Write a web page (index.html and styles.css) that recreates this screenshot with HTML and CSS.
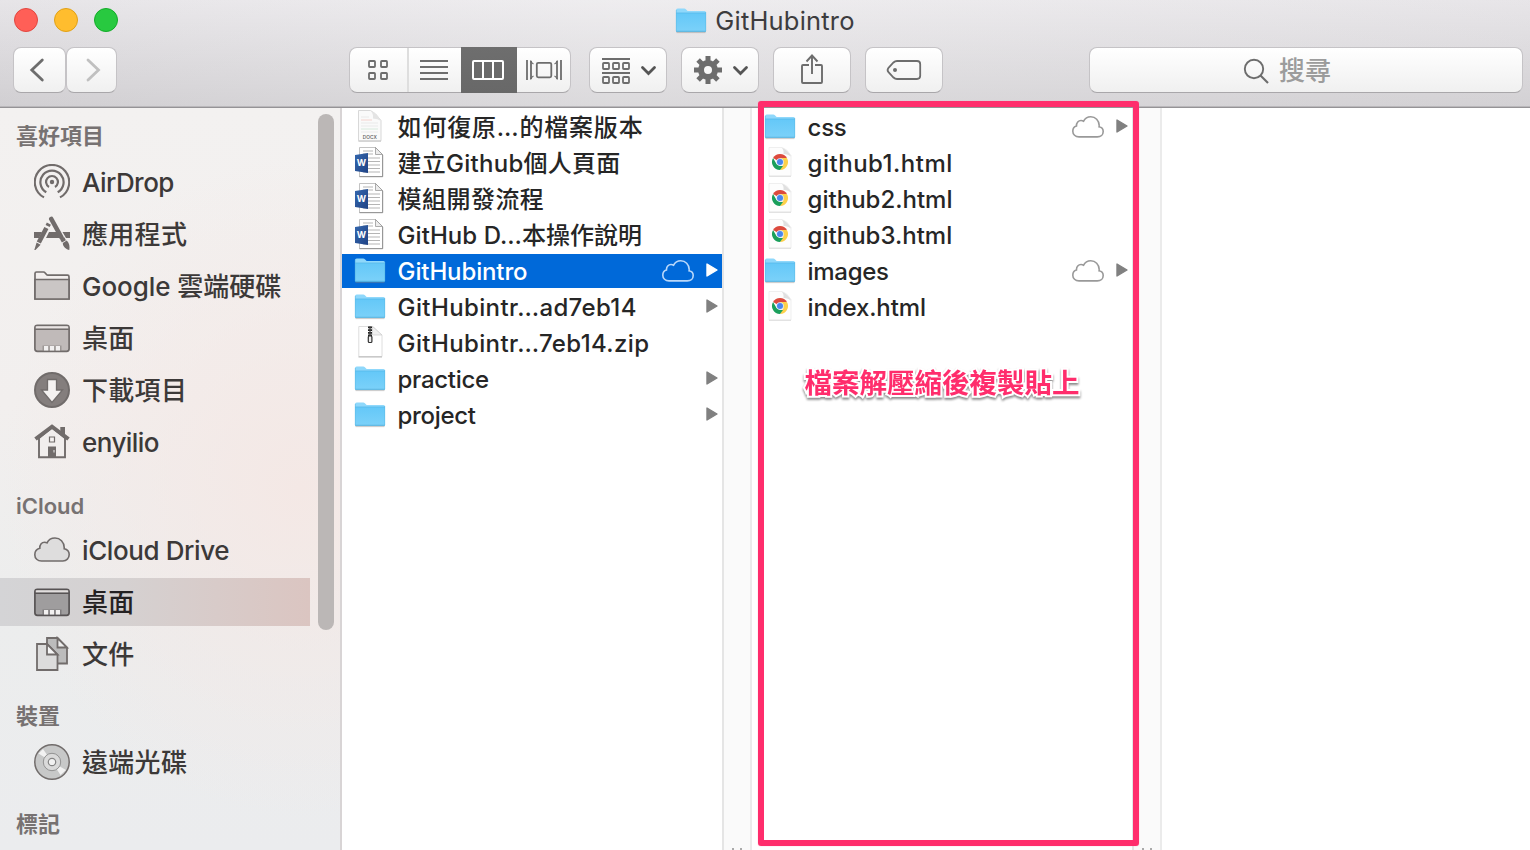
FILE: index.html
```
<!DOCTYPE html>
<html lang="zh-Hant">
<head>
<meta charset="utf-8">
<title>GitHubintro</title>
<link rel="stylesheet" href="styles.css">
</head>
<body>
<svg class="defs" width="0" height="0">
  <defs>
    <linearGradient id="fg" x1="0" y1="0" x2="0" y2="1"><stop offset="0" stop-color="#64c8f8"/><stop offset="1" stop-color="#7bd1f9"/></linearGradient>
    <linearGradient id="wg" x1="0" y1="0" x2="1" y2="1"><stop offset="0" stop-color="#3567ad"/><stop offset="1" stop-color="#1f4386"/></linearGradient>
    <symbol id="folder" viewBox="0 0 32 36">
      <path d="M1.500 29.600h29" stroke="#888" stroke-opacity=".45"/>
      <path d="M1 7Q1 5.500 2.700 5.500h6.500q1 0 1.700.8l1.200 1.200q.5.500 1.400.5h16q1.500 0 1.500 1.500V28H1z" fill="#8fd8fb"/>
      <path d="M1 10h30v17.200q0 1.500-1.500 1.500h-27Q1 28.700 1 27.200z" fill="url(#fg)"/>
      <path d="M1 10h30" stroke="#55b9ea" stroke-width=".8"/><path d="M1 28.300h30" stroke="#4eaeda" stroke-width=".9"/>
      <path d="M1.300 7v21M30.700 9v19" stroke="#5dbbe6" stroke-width=".6"/>
    </symbol>
    <symbol id="docx" viewBox="0 0 32 36">
      <path d="M4.500 1.500h12q5 2 10.500 10v20.300H4.500z" fill="#fafafa" stroke="#d4d4d4" stroke-width=".9"/>
      <path d="M16.500 1.500q3 3 2.500 8 5 0 8 2.500Q23 4 16.500 1.500z" fill="#e4e4e4"/>
      <path d="M7 8h8M7 14h17M7 17h17M7 23h17" stroke="#e6e6e6" stroke-width=".8"/><path d="M7 11h11" stroke="#f3c9c3" stroke-width=".8"/><path d="M7 20h17" stroke="#cfe6d6" stroke-width=".8"/>
      <text x="15.800" y="29.500" text-anchor="middle" font-size="4.800" fill="#555" class="mini">DOCX</text>
      <path d="M4.500 32.200H27" stroke="#bbb" stroke-width=".8"/>
    </symbol>
    <symbol id="word" viewBox="0 0 32 36">
      <path d="M5.500 2.500h16l7 7v22h-23z" fill="#fff" stroke="#b4b4b4" stroke-width=".8"/>
      <path d="M5.500 31.700h23.200V10M21.500 2.500l7 7" fill="none" stroke="#888" stroke-width=".9"/>
      <path d="M21.500 2.500V9.500h7z" fill="#ececec" stroke="#999" stroke-width=".8"/>
      <path d="M9 6h10M9 9h10M14 13h12M14 16.500h12M14 20h12M14 23.500h12M9 27h17" stroke="#a2a2a2" stroke-width=".8"/>
      <path d="M1 10 14 8v20L1 26z" fill="url(#wg)"/>
      <text x="7.300" y="21.400" text-anchor="middle" font-size="9" font-weight="700" fill="#fff" class="mini">W</text>
    </symbol>
    <symbol id="zip" viewBox="0 0 32 36">
      <path d="M4.800 1.500h14.200l9 9v21H4.800z" fill="#fff" stroke="#dadada" stroke-width=".9"/>
      <path d="M18.500 1.500V10H28z" fill="#f0f0f0" stroke="#ccc" stroke-width=".7"/>
      <path d="M4.500 32h23.500" stroke="#aaa" stroke-width=".8"/>
      <path d="M16 1.500v12" stroke="#222" stroke-width="4" stroke-dasharray="1.800 .9"/><path d="M16 1.500v12" stroke="#444" stroke-width="1.300"/>
      <rect x="14.300" y="11" width="3.600" height="6.500" rx="1" fill="#eee" stroke="#333" stroke-width="1.200"/>
    </symbol>
    <symbol id="html" viewBox="0 0 32 36">
      <path d="M5 2.500h13q5 1 9 8v20.500H5z" fill="#fdfdfd" stroke="#e8e8e8" stroke-width=".7"/>
      <path d="M17.500 2.500q2.500 2 2 6.500 4-.5 7.500 2.500-3-6.500-9.500-9z" fill="#e0e0e0"/>
      <path d="M5 31.300h22" stroke="#d5d5d5" stroke-width=".8"/>
      <path d="M16 17 9.070 13a8 8 0 0 1 13.860 0z" fill="#dc4a3d"/>
      <path d="M16 13h6.930A8 8 0 0 1 16 25l3.500-6z" fill="#fdd14b"/>
      <path d="M9.070 13 12.500 19l3.500 2 3 0L16 25A8 8 0 0 1 9.070 13z" fill="#1a9f5b"/>
      <circle cx="16" cy="17" r="3.800" fill="#dfe8f6"/><circle cx="16" cy="17" r="3" fill="#4a87ee"/>
    </symbol>
    <symbol id="cloud" viewBox="0 0 32 22">
      <path d="M7 20.900C3.300 20.900.8 18.400.8 15.200c0-2.700 1.500-4.600 3.700-5.200C4.300 6.700 6.500 4.500 9 4.500c1 0 1.800.2 2.600.7C13 2.300 15.700.8 18.800.8c4.700 0 8.200 3.500 8.400 8.600.1.500 0 1-.1 1.400 2.400.4 4.100 2.200 4.100 4.700 0 3.100-2.400 5.400-5.900 5.400z" fill="none" stroke="currentColor" stroke-width="1.600"/>
    </symbol>
    <symbol id="arrow" viewBox="0 0 12 14"><path d="M1 1v12l10-6z" fill="currentColor" stroke="currentColor" stroke-width="1.400" stroke-linejoin="round"/></symbol>
    <symbol id="desk" viewBox="0 0 36 36">
      <rect x=".9" y="5.300" width="34.200" height="26" rx="2.500" fill="var(--fill)" stroke="currentColor" stroke-width="1.700"/>
      <path d="M1.800 6.200h32.400v2.500H1.800z" fill="#f3efee" fill-opacity=".8"/><path d="M1 9.300h34" stroke="currentColor" stroke-width="1.500"/>
      <path d="M8.500 25.500h19v5h-19z" fill="currentColor" fill-opacity=".45"/><path d="M10 26h4.200v4.400H10zM15.900 26h4.200v4.400h-4.200zM21.800 26H26v4.400h-4.200z" fill="#f2f0f0"/>
    </symbol>
  </defs>
</svg>

<div class="window">
  <header class="chrome">
    <div class="titlebar">
      <div class="lights"><i class="red"></i><i class="yellow"></i><i class="green"></i></div>
      <div class="title"><svg class="file"><use href="#folder"/></svg><span>GitHubintro</span></div>
    </div>
    <div class="toolbar">
      <button class="btn back"><svg width="51" height="44" viewBox="14 48 51 44"><path d="M42.300 60 31.800 70 42.300 80" stroke-width="2.800" stroke-linecap="round"/></svg></button>
      <button class="btn forward"><svg width="49" height="44" viewBox="67 48 49 44"><path d="M88 60 98.500 70 88 80" stroke-width="2.800" stroke-linecap="round"/></svg></button>
      <div class="btn views">
        <svg width="57" height="44" viewBox="350 48 57 44" stroke-width="2"><rect x="369" y="61" width="6" height="6" rx=".8"/><rect x="381" y="61" width="6" height="6" rx=".8"/><rect x="369" y="73" width="6" height="6" rx=".8"/><rect x="381" y="73" width="6" height="6" rx=".8"/></svg>
        <svg class="split" width="54" height="44" viewBox="408 48 52 44"><path d="M419 61h28M419 67h28M419 73h28M419 79h28" stroke-width="1.900"/></svg>
        <svg class="active" width="56" height="46" viewBox="461 47 56 46"><rect x="473" y="61" width="30" height="18" rx="1"/><path d="M483 61v18M493 61v18"/></svg>
        <svg width="53" height="44" viewBox="517 48 53 44"><rect x="536.800" y="62.800" width="14.500" height="14.500" rx="1.500"/><path d="M527 60v20M561 60v20M531 61v18M557 61v18"/><path d="M530.500 60.500q.8 2.500 3 3.500M530.500 79.500q.8-2.500 3-3.500M557.500 60.500q-.8 2.500-3 3.500M557.500 79.500q-.8-2.500-3-3.500" stroke-width="1.200"/></svg>
      </div>
      <button class="btn tool group"><svg width="76" height="44" viewBox="590 48 76 44"><path d="M602 59h28M602 73h28"/><g><rect x="603" y="63" width="6" height="6" rx=".8"/><rect x="613" y="63" width="6" height="6" rx=".8"/><rect x="623" y="63" width="6" height="6" rx=".8"/><rect x="603" y="77" width="6" height="6" rx=".8"/><rect x="613" y="77" width="6" height="6" rx=".8"/><rect x="623" y="77" width="6" height="6" rx=".8"/></g><path d="m642.500 67.500 6 6 6-6" stroke="#555" stroke-width="2.800" stroke-linecap="round"/></svg></button>
      <button class="btn tool"><svg width="76" height="44" viewBox="682 48 76 44"><circle cx="708" cy="70" r="7" stroke-width="6"/><path d="M708 56v5M708 79v5M694 70h5M717 70h5M698.100 60.100l3.500 3.500M714.400 76.400l3.500 3.500M717.900 60.100l-3.500 3.500M701.600 76.400l-3.500 3.500" stroke-width="5"/><path d="m734.500 67.500 6 6 6-6" stroke="#555" stroke-width="2.800" stroke-linecap="round"/></svg></button>
      <button class="btn tool"><svg width="76" height="44" viewBox="774 48 76 44"><path d="M809 65h-6q-1 0-1 1v16q0 1 1 1h18q1 0 1-1V66q0-1-1-1h-6M812 74V56M806.500 61.500l5.500-6 5.500 6" stroke-width="1.900"/></svg></button>
      <button class="btn tool"><svg width="76" height="44" viewBox="866 48 76 44"><path d="M897 61h20q3.200 0 3.200 3.200v11.600q0 3.200-3.200 3.200h-20q-2 0-3.500-1.500l-5-5.300q-1.800-2.200 0-4.400l5-5.300Q895 61 897 61z" stroke-width="1.800"/><circle class="dot" cx="895" cy="70" r="2"/></svg></button>
      <div class="btn search"><svg width="27" height="27" viewBox="1243 58 27 27"><circle cx="1254" cy="70" r="9.200" stroke-width="1.900"/><path d="m1260.500 76.500 7.500 7.500" stroke-width="2.100"/></svg><span>搜尋</span></div>
    </div>
  </header>

  <div class="body">
    <aside class="sidebar">
      <h2 class="first">喜好項目</h2>
      <div class="item"><svg viewBox="0 0 36 36"><path d="M10 33.400a17.200 17.200 0 1 1 16 0M12.300 28.300a11.600 11.600 0 1 1 11.400 0M15 23a5.900 5.900 0 1 1 6 0" fill="none" stroke="currentColor" stroke-width="2.200"/><circle cx="18" cy="18" r="2.200" fill="currentColor"/></svg><span class="airdrop">AirDrop</span></div>
      <div class="item"><svg viewBox="0 0 36 36"><path d="M0 16h8l-3 6H0zM15 16h8l3 6H12zM28.500 16H36v6h-4z" fill="currentColor"/><g stroke="currentColor" stroke-width="4.600"><path d="m17.300 3 10.200 18.500" stroke-linecap="round"/><path d="m28.300 22.500 1.600 2.800M13.600 10 14.900 7.600M4.800 26.500 12.400 12"/></g><path d="m2.600 26.500 4 2.200L1.500 34H.3zM28.800 27l4-2.500c2.800 3 3 6 2.500 9.500-3-.5-6.500-3-6.500-7z" fill="currentColor"/></svg><span>應用程式</span></div>
      <div class="item"><svg viewBox="0 0 36 36"><path d="M1 5.500Q1 4 2.500 4h7q1 0 1.500.7L12.500 6.500q.5.700 1.500.7h19.500Q35 7.200 35 8.700V31H1z" fill="#f3efee" stroke="currentColor" stroke-width="1.700"/><path d="M1 11.500h34V31H1z" fill="#cac6c5" stroke="currentColor" stroke-width="1.700"/></svg><span class="google">Google 雲端硬碟</span></div>
      <div class="item"><svg class="dsk"><use href="#desk"/></svg><span>桌面</span></div>
      <div class="item"><svg viewBox="0 0 36 36"><circle cx="18" cy="18" r="17" fill="#847e7d" stroke="currentColor" stroke-width="2"/><path d="M13.500 7.500h9V18h6L18 30.500 7.500 18h6z" fill="#f5f2f1" stroke="currentColor" stroke-width="1.300"/></svg><span>下載項目</span></div>
      <div class="item"><svg viewBox="0 0 36 36"><path d="M26.300 3H31v12h-4.700z" fill="currentColor"/><path d="M5 14v19.200h26V14L18 3.500z" fill="#f1eeed" stroke="currentColor" stroke-width="1.900"/><path d="M1.500 15 18 2.700 34.500 15" fill="none" stroke="currentColor" stroke-width="4"/><path d="M14 22.500h8V34h-8z" fill="currentColor"/><path d="M20 26v2.500" stroke="#eee"/><path d="M15.500 13h5v5h-5z" fill="#f5f2f1" stroke="currentColor" stroke-width="1.200"/></svg><span class="home">enyilio</span></div>
      <h2>iCloud</h2>
      <div class="item"><svg viewBox="0 0 36 36"><path d="M7.500 29C3.500 29 .8 26.400.8 22.700c0-3.200 2-5.600 5-6.400C5.600 12.300 8 10.200 10.500 10.200c1 0 1.700.2 2.500.7C14.500 7.800 17.600 6 21 6c5.200 0 9.100 4 9.200 9.500v1.300c3 .6 5 2.800 5 5.800 0 3.700-2.700 6.400-6.300 6.400z" fill="#dedddd" stroke="currentColor" stroke-width="1.600"/></svg><span class="drive">iCloud Drive</span></div>
      <div class="item selected"><svg class="dsk"><use href="#desk"/></svg><span>桌面</span></div>
      <div class="item"><svg viewBox="0 0 36 36" stroke="currentColor" stroke-width="1.800"><path d="M13 2h10.500L33 11.500v16H13z" fill="#bcbcbc"/><path d="M23.500 2v9.500H33z" fill="#eee"/><path d="M3 8h10l10.500 10.500V34H3z" fill="#dcdcdc"/><path d="M13 8v10.500h10.500z" fill="#f5f5f5"/></svg><span>文件</span></div>
      <h2 class="lift">裝置</h2>
      <div class="item"><svg viewBox="0 0 36 36"><circle cx="18" cy="18" r="17.200" fill="#c7c8c8" stroke="currentColor" stroke-width="1.500"/><path d="M18 18 4.500 9.500 9 5zM18 18l14 8-5.500 5z" fill="#f2f2f2"/><circle cx="18" cy="18" r="8.700" fill="#dadada" stroke="#929292"/><circle cx="18" cy="18" r="3.700" fill="#f2f2f2" stroke="#858585" stroke-width="1.200"/></svg><span>遠端光碟</span></div>
      <h2 class="lift">標記</h2>
      <div class="scrollbar"></div>
    </aside>

    <main class="columns">
      <section class="column">
        <div class="row"><svg class="file"><use href="#docx"/></svg><span class="cjk wide">如何復原…的檔案版本</span></div>
        <div class="row"><svg class="file"><use href="#word"/></svg><span class="cjk">建立Github個人頁面</span></div>
        <div class="row"><svg class="file"><use href="#word"/></svg><span class="cjk even">模組開發流程</span></div>
        <div class="row"><svg class="file"><use href="#word"/></svg><span class="cjk tight">GitHub D…本操作說明</span></div>
        <div class="row current"><svg class="file"><use href="#folder"/></svg><span class="trim">GitHubintro</span><svg class="cloud"><use href="#cloud"/></svg><svg class="arrow"><use href="#arrow"/></svg></div>
        <div class="row"><svg class="file"><use href="#folder"/></svg><span class="long">GitHubintr…ad7eb14</span><svg class="arrow"><use href="#arrow"/></svg></div>
        <div class="row"><svg class="file"><use href="#zip"/></svg><span class="long">GitHubintr…7eb14.zip</span></div>
        <div class="row"><svg class="file"><use href="#folder"/></svg><span class="snug">practice</span><svg class="arrow"><use href="#arrow"/></svg></div>
        <div class="row"><svg class="file"><use href="#folder"/></svg><span class="snug">project</span><svg class="arrow"><use href="#arrow"/></svg></div>
      </section>
      <div class="gutter"><i></i><i></i></div>
      <section class="column">
        <div class="row"><svg class="file"><use href="#folder"/></svg><span class="snug">css</span><svg class="cloud"><use href="#cloud"/></svg><svg class="arrow"><use href="#arrow"/></svg></div>
        <div class="row"><svg class="file"><use href="#html"/></svg><span class="one">github1.html</span></div>
        <div class="row"><svg class="file"><use href="#html"/></svg><span class="numbered">github2.html</span></div>
        <div class="row"><svg class="file"><use href="#html"/></svg><span class="numbered">github3.html</span></div>
        <div class="row"><svg class="file"><use href="#folder"/></svg><span class="snug">images</span><svg class="cloud"><use href="#cloud"/></svg><svg class="arrow"><use href="#arrow"/></svg></div>
        <div class="row"><svg class="file"><use href="#html"/></svg><span class="trim">index.html</span></div>
      </section>
      <div class="gutter"><i></i><i></i></div>
    </main>
  </div>
  <div class="mark"></div>
  <div class="note">檔案解壓縮後複製貼上</div>
</div>
</body>
</html>
```
FILE: styles.css
```
* { box-sizing: border-box; }
body {
  margin: 0;
  background: #fff;
  font-family: Inter, "Noto Sans CJK TC", sans-serif;
  color: #262626;
}
.defs { position: absolute; }
svg { display: block; flex: none; }
.mini { font-family: Inter, sans-serif; }
.window { position: relative; width: 1530px; height: 850px; overflow: hidden; display: flex; flex-direction: column; }

.chrome {
  height: 108px;
  flex: none;
  border-bottom: 1px solid #959396;
  box-shadow: inset 0 -1px #b9b7ba;
  background: linear-gradient(90deg, rgba(218,216,220,.15), rgba(255,255,255,.25) 40%, rgba(225,223,226,.2)), linear-gradient(#e9e7ea, #cfcdd0);
}
.titlebar { height: 47px; display: grid; grid-template-columns: 1fr auto 1fr; }
.lights { display: flex; gap: 16px; padding: 8px 14px; }
.lights i { width: 24px; height: 24px; border-radius: 50%; border: 1px solid var(--edge); }
.red { background: #ff5f57; --edge: #e2463f; }
.yellow { background: #ffbd2e; --edge: #e1a116; }
.green { background: #28c940; --edge: #12ac28; }
.title { display: flex; gap: 8px; font-size: 25.5px; line-height: 42px; color: #3d3c3e; letter-spacing: .2px; }
.title .file { margin-top: 3px; }

.toolbar { display: flex; height: 46px; padding: 0 7px 0 13px; }
.btn {
  display: flex;
  height: 46px;
  padding: 0;
  border: 1px solid #c5c3c6;
  border-bottom-color: #a9a7aa;
  border-radius: 8px;
  background: linear-gradient(#fff, #f0f0f0);
}
.btn svg { fill: none; stroke: #6d6d6d; stroke-width: 1.8; }
.btn .dot { fill: #6d6d6d; stroke: none; }
.back { width: 53px; }
.forward { width: 51px; margin-right: 232px; }
.forward svg { stroke: #c0c0c0; }
.views { width: 222px; margin-right: 18px; }
.btn .split { border-left: 2px solid #dedede; width: 54px; }
.btn .active { background: linear-gradient(#6e6e6e, #686868); stroke: #fff; stroke-width: 2; margin: -1px 0; }
.tool { width: 78px; margin-right: 14px; }
.tool:nth-last-child(2) { margin-right: 146px; }
.search { flex: 1; align-items: center; padding-left: 153px; gap: 9px; font-size: 26px; color: #9c9c9c; line-height: 44px; }
.search span { padding-top: 2px; font-weight: 500; }

.body { flex: 1; display: flex; min-height: 0; }
.sidebar {
  position: relative;
  width: 342px;
  flex: none;
  border-right: 2px solid #d8d4d5;
  background: radial-gradient(ellipse 300px 330px at 300px 380px, #f4e8e5, rgba(244,232,229,0)), linear-gradient(#f3f1f0, #f2efee 40%, #eceded 68%, #ebecee);
}
.sidebar h2 { margin: 0; height: 56px; padding: 20px 0 0 16px; font-size: 22px; line-height: 36px; font-weight: 600; color: #777272; }
.sidebar .first { height: 48px; padding-top: 10px; }
.sidebar .lift { padding-top: 18px; }
.item { height: 52px; display: flex; align-items: center; gap: 12px; padding-left: 34px; font-size: 26px; line-height: 38px; color: #716c6b; --fill: #c0bab9; }
.item svg { width: 36px; height: 36px; }
.item span { color: #3c3938; padding-top: 2px; letter-spacing: .3px; font-weight: 450; }
.item .airdrop, .item .home { letter-spacing: -.55px; }
.item .drive { letter-spacing: -.4px; }
.item .google { letter-spacing: -.05px; }
.selected { width: 310px; height: 48px; margin: 2px 0; color: #575354; --fill: #9f9d9e; background: linear-gradient(90deg, #d4d4d6, #d5d1d1 40%, #dbc5c1); }
.item.selected span { color: #242122; font-weight: 500; }
.scrollbar { position: absolute; left: 318px; top: 6px; width: 16px; height: 516px; border-radius: 8px; background: #bbb7b6; }

.columns { display: flex; flex: 1; background: #fff; }
.column { width: 380px; padding-top: 1px; font-size: 24px; font-weight: 450; }
.row { height: 36px; display: flex; padding: 0 4px 0 12px; line-height: 38px; color: #262626; white-space: nowrap; }
.row span { margin-left: 11.600px; flex: 1; }
.row .cjk { letter-spacing: .25px; }
.row .wide { letter-spacing: .8px; }
.row .even { letter-spacing: .45px; }
.row .tight { letter-spacing: .05px; }
.row .long { letter-spacing: .38px; }
.row .snug { letter-spacing: -.32px; }
.row .trim { letter-spacing: -.13px; }
.row .one { letter-spacing: .5px; }
.row .numbered { letter-spacing: 0; }
.file { width: 32px; height: 36px; }
.cloud { width: 32px; height: 22px; margin: 7px 12px 0 0; color: #999; }
.arrow { width: 12px; height: 14px; margin-top: 10px; color: #808080; }
.current { height: 34px; margin: 1px 0; line-height: 36px; color: #fff; background: #0069d9; }
.current .file { margin-top: -1px; }
.current .cloud { margin-top: 6px; color: #b9d8fa; }
.current .arrow { margin-top: 9px; color: #fff; }
.gutter { width: 30px; display: flex; justify-content: center; align-items: flex-end; gap: 6px; border-left: 2px solid #e5e5e5; border-right: 2px solid #ebebeb; background: #fafafa; }
.gutter i { width: 2px; height: 2px; background: #aaa; }

.mark { position: absolute; left: 758px; top: 101px; width: 381px; height: 745px; border: 6px solid #ff2d6c; border-radius: 3px; box-shadow: 0 0 1px #ff89aa; }
.note {
  position: absolute; left: 804.500px; top: 361px;
  font: 700 27.500px/40px "Noto Sans CJK TC", sans-serif;
  color: #ff2d6c; white-space: nowrap;
  -webkit-text-stroke: 4px #fff; paint-order: stroke fill;
  filter: drop-shadow(0 2px 1px rgba(0,0,0,.45));
}
```
